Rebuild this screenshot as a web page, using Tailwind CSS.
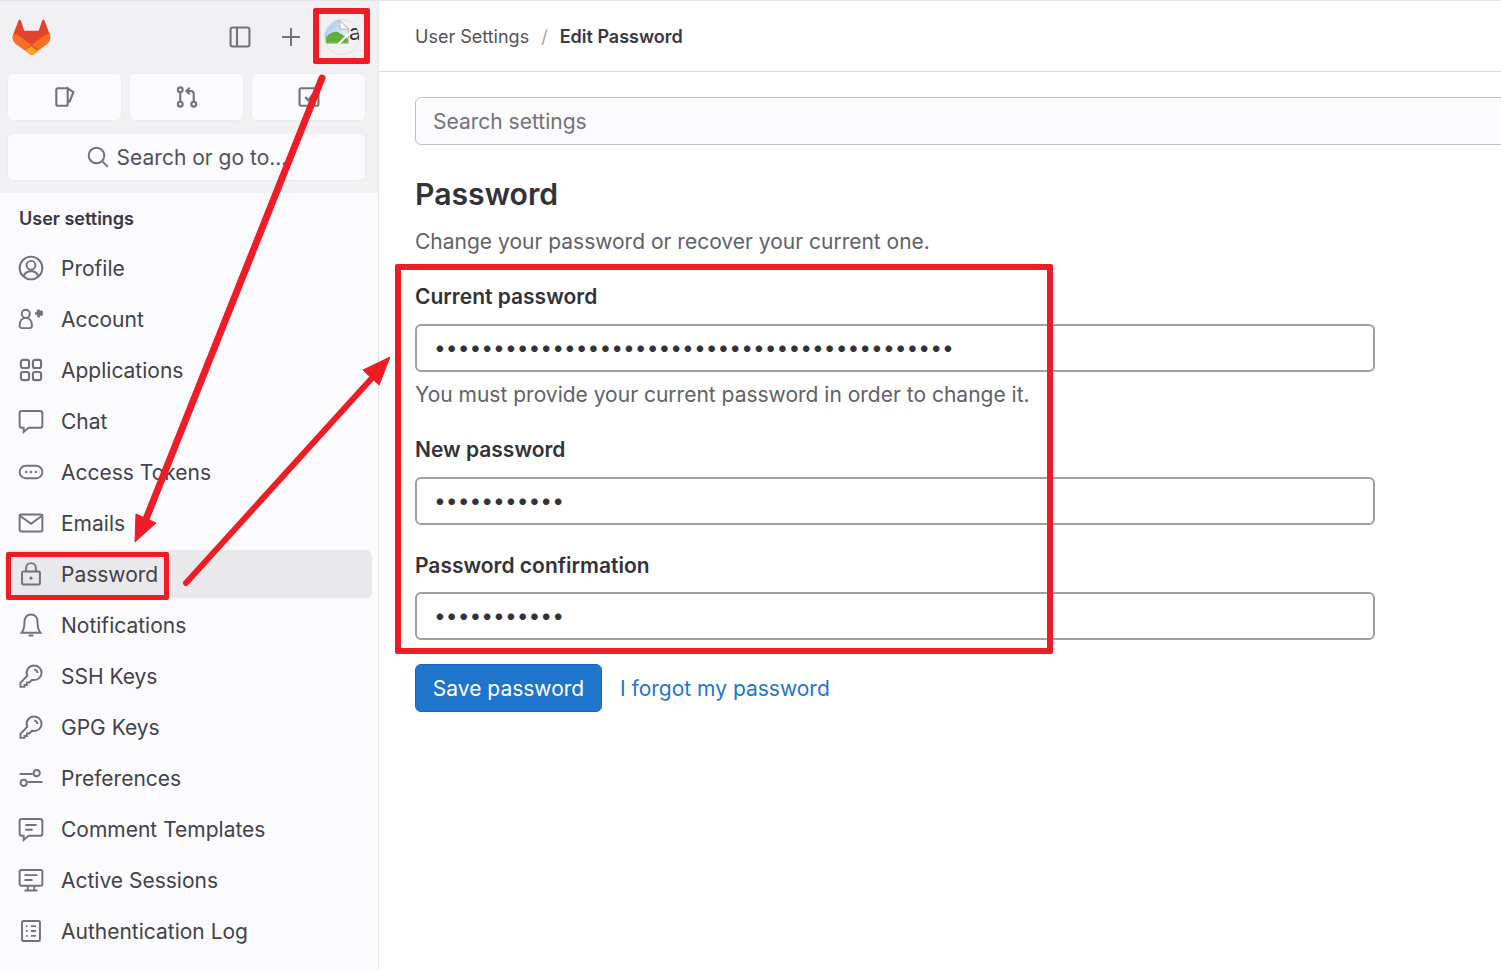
<!DOCTYPE html>
<html lang="en">
<head>
  <meta charset="UTF-8" />
  <title>Edit Password - User Settings</title>
  <script src="https://cdn.jsdelivr.net/npm/@tailwindcss/browser@4"></script>
</head>
<body class="bg-white text-[#333238] font-['Inter',sans-serif] overflow-hidden">
  <div class="relative flex w-[1501px] h-[970px] overflow-hidden border-t border-[#e4e4e6]">

    <!-- sidebar -->
    <aside class="w-[379px] shrink-0 bg-[#fbfafd] border-r border-[#e6e6e8] flex flex-col">
      <div class="bg-[#f1f1f3] h-[192px] pl-[7px] pr-[12px]">
        <div class="flex items-center h-[72px]">
          <svg class="w-[39px] h-[36px] ml-[5px]" viewBox="0 0 25 24">
            <path fill="#e24329" d="m24.5 9.7-.03-.09-3.3-8.6a.86.86 0 0 0-1.63.08l-2.23 6.82H7.7L5.47 1.09a.86.86 0 0 0-1.63-.08L.53 9.6l-.03.09a6.13 6.13 0 0 0 2.03 7.08l5.5 4.12 4.47 3.38 4.47-3.38 5.5-4.12a6.13 6.13 0 0 0 2.03-7.08Z"/>
            <path fill="#fc6d26" d="m24.5 9.7-.03-.09a11.4 11.4 0 0 0-4.5 2.02l-7.47 5.65 4.76 3.6 5.5-4.11a6.13 6.13 0 0 0 1.74-7.07Z"/>
            <path fill="#fca326" d="m8.03 20.88 2.94 2.22 1.53 1.16 1.03-.01.5-.37 2.97-2.23-4.5-3.42-4.47 2.65Z"/>
            <path fill="#fc6d26" d="M5.03 11.63A11.4 11.4 0 0 0 .53 9.6l-.03.09a6.13 6.13 0 0 0 1.74 7.07l5.79 4.12 4.47-3.6-7.47-5.65Z"/>
          </svg>
          <svg class="w-[24px] h-[24px] ml-[177px] text-[#737278]" viewBox="0 0 16 16" fill="none" stroke="currentColor" stroke-width="1.4">
            <rect x="1.700" y="1.700" width="12.600" height="12.600" rx="1.500"/><path d="M6 1.700v12.600"/>
          </svg>
          <svg class="w-[24px] h-[24px] ml-[27px] text-[#737278]" viewBox="0 0 16 16" fill="none" stroke="currentColor" stroke-width="1.3">
            <path d="M8 2v12M2 8h12"/>
          </svg>
          <div class="ml-[21px] w-[36px] h-[36px] rounded-full border border-[#e0e0e2] overflow-hidden relative">
            <svg class="absolute left-0 top-0 w-[24px] h-[24px]" viewBox="0 0 16 16">
              <defs><linearGradient id="sky" x1="0" y1="0" x2="1" y2="1"><stop offset="0" stop-color="#a3c5ef"/><stop offset="1" stop-color="#f4f8fd"/></linearGradient></defs>
              <path fill="url(#sky)" stroke="#a8a8ab" stroke-width=".6" d="M.5.500h9.500l5.500 5.500v9.500H.500z"/>
              <path fill="#5fae35" d="M.800 15.200v-3.500c2-3 5.500-4.500 8-3.500 2 .8 4 2.500 6.400 4.500v2.500z"/>
              <path fill="#fff" stroke="#a8a8ab" stroke-width=".5" d="M10 .500l5.500 5.500H10z"/>
              <path fill="#fbfafd" d="M8 16l7.800-7.800v2L10 16z"/>
            </svg>
            <span class="absolute left-[24px] top-0 text-[22px] leading-[24px] text-[#333238]">a</span>
          </div>
        </div>
        <div class="grid grid-cols-3 gap-[7px]">
          <div class="h-[48px] rounded-[6px] bg-[#fbfafd] border border-[#ececef] flex items-center justify-center">
            <svg class="w-[24px] h-[24px] text-[#737278]" viewBox="0 0 16 16" fill="none" stroke="currentColor" stroke-width="1.4">
              <path d="M10 2.200H3.200a1 1 0 0 0-1 1v9.600a1 1 0 0 0 1 1h5.600a1 1 0 0 0 1-1V2.200l3.800 2.600-2.800 7"/>
            </svg>
          </div>
          <div class="h-[48px] rounded-[6px] bg-[#fbfafd] border border-[#ececef] flex items-center justify-center">
            <svg class="w-[24px] h-[24px] text-[#737278]" viewBox="0 0 16 16" fill="none" stroke="currentColor" stroke-width="1.4">
              <circle cx="3.500" cy="3.200" r="1.600"/><circle cx="3.500" cy="12.800" r="1.600"/><circle cx="12.500" cy="12.800" r="1.600"/>
              <path d="M3.500 4.800v6.400M12.500 11.200V6a2 2 0 0 0-2-2H8M9.800 1.800 7.600 4l2.200 2.200"/>
            </svg>
          </div>
          <div class="h-[48px] rounded-[6px] bg-[#fbfafd] border border-[#ececef] flex items-center justify-center">
            <svg class="w-[24px] h-[24px] text-[#737278]" viewBox="0 0 16 16" fill="none" stroke="currentColor" stroke-width="1.4">
              <rect x="1.700" y="2.200" width="12.600" height="11.600" rx="1"/><path d="m5.500 8 2 2.200 3-4"/>
            </svg>
          </div>
        </div>
        <div class="mt-[12px] h-[48px] rounded-[6px] bg-[#fbfafd] border border-[#ececef] flex items-center justify-center text-[21px] text-[#535158]">
          <svg class="w-[24px] h-[24px] mr-[7px] text-[#737278]" viewBox="0 0 16 16" fill="none" stroke="currentColor" stroke-width="1.300">
            <circle cx="7" cy="7" r="5.200"/><path d="m11 11 3.600 3.600"/>
          </svg>
          <span class="pt-[2px]">Search or go to...</span>
        </div>
      </div>

      <nav class="px-[5px] pt-[12px]">
        <div class="pl-[14px] h-[27px] flex items-center text-[18px] font-semibold text-[#3a383f]">User settings</div>
        <ul class="mt-[10px] text-[21px] text-[#434248]">
          <li class="h-[51px] pt-[2px] flex items-center">
            <svg class="w-[26px] h-[26px] -mt-[2px] ml-[13px] mr-[17px] text-[#737278]" viewBox="0 0 16 16" fill="none" stroke="currentColor" stroke-width="1.200">
              <circle cx="8" cy="8" r="7"/><circle cx="8" cy="6.300" r="2.700"/><path d="M3.500 13c.8-2 2.500-3 4.500-3s3.700 1 4.500 3"/>
            </svg>Profile</li>
          <li class="h-[51px] pt-[2px] flex items-center">
            <svg class="w-[26px] h-[26px] -mt-[2px] ml-[13px] mr-[17px] text-[#737278]" viewBox="0 0 16 16" fill="none" stroke="currentColor" stroke-width="1.200">
              <circle cx="4.800" cy="4.800" r="2.500"/><path d="M1 12c0-3 1.600-4.700 3.800-4.700s3.800 1.700 3.800 4.700c0 1-.6 1.600-1.500 1.600H2.500C1.600 13.600 1 13 1 12Z"/>
              <circle cx="13" cy="4.500" r="1.700" fill="currentColor" stroke-width="1.600" stroke-dasharray="1.400 .8"/>
            </svg>Account</li>
          <li class="h-[51px] pt-[2px] flex items-center">
            <svg class="w-[26px] h-[26px] -mt-[2px] ml-[13px] mr-[17px] text-[#737278]" viewBox="0 0 16 16" fill="none" stroke="currentColor" stroke-width="1.300">
              <rect x="1.800" y="1.800" width="5" height="5" rx="1.300"/><rect x="9.200" y="1.800" width="5" height="5" rx="1.300"/>
              <rect x="1.800" y="9.200" width="5" height="5" rx="1.300"/><rect x="9.200" y="9.200" width="5" height="5" rx="1.300"/>
            </svg>Applications</li>
          <li class="h-[51px] pt-[2px] flex items-center">
            <svg class="w-[26px] h-[26px] -mt-[2px] ml-[13px] mr-[17px] text-[#737278]" viewBox="0 0 16 16" fill="none" stroke="currentColor" stroke-width="1.200">
              <path d="M2.500 1.800h11A1.500 1.500 0 0 1 15 3.300v7.400a1.500 1.500 0 0 1-1.500 1.500H6.500l-3 2.500v-2.500h-1A1.500 1.500 0 0 1 1 10.700V3.300a1.500 1.500 0 0 1 1.500-1.500Z"/>
            </svg>Chat</li>
          <li class="h-[51px] pt-[2px] flex items-center">
            <svg class="w-[26px] h-[26px] -mt-[2px] ml-[13px] mr-[17px] text-[#737278]" viewBox="0 0 16 16" fill="none" stroke="currentColor" stroke-width="1.200">
              <rect x="1" y="4.200" width="14" height="7.600" rx="3.800"/><path d="M5 8h.01M8 8h.01M11 8h.01" stroke-width="1.500" stroke-linecap="round"/>
            </svg>Access Tokens</li>
          <li class="h-[51px] pt-[2px] flex items-center">
            <svg class="w-[26px] h-[26px] -mt-[2px] ml-[13px] mr-[17px] text-[#737278]" viewBox="0 0 16 16" fill="none" stroke="currentColor" stroke-width="1.200">
              <rect x="1" y="2.800" width="14" height="10.400" rx="1"/><path d="m1.200 3.500 6.800 5 6.800-5"/>
            </svg>Emails</li>
          <li class="h-[48px] my-[1.500px] pt-[2px] flex items-center bg-[#e9e8eb] rounded-[6px] mr-[1px]">
            <svg class="w-[26px] h-[26px] -mt-[2px] ml-[13px] mr-[17px] text-[#737278]" viewBox="0 0 16 16" fill="none" stroke="currentColor" stroke-width="1.200">
              <rect x="2.500" y="6.500" width="11" height="8" rx=".8"/><path d="M5 6.500V4.300a3 3 0 0 1 6 0v2.200"/><circle cx="8" cy="10.500" r="1" fill="currentColor" stroke="none"/>
            </svg>Password</li>
          <li class="h-[51px] pt-[2px] flex items-center">
            <svg class="w-[26px] h-[26px] -mt-[2px] ml-[13px] mr-[17px] text-[#737278]" viewBox="0 0 16 16" fill="none" stroke="currentColor" stroke-width="1.200">
              <path d="M8 1.500c-2.700 0-4 2-4 4.500 0 3-.6 5.300-1.800 6.800h11.600C12.600 11.300 12 9 12 6c0-2.500-1.300-4.500-4-4.500ZM6.500 14.500h3"/>
            </svg>Notifications</li>
          <li class="h-[51px] pt-[2px] flex items-center">
            <svg class="w-[26px] h-[26px] -mt-[2px] ml-[13px] mr-[17px] text-[#737278]" viewBox="0 0 16 16" fill="none" stroke="currentColor" stroke-width="1.200">
              <path d="M10 1.500a4.500 4.500 0 0 1 0 9c-.5 0-1-.1-1.400-.2L7 12H5.500v1.500H4v1.200H1.500v-2.500l4.200-4.400A4.500 4.500 0 0 1 10 1.500Z"/><path d="M10 4.200a2 2 0 0 1 2 2"/>
            </svg>SSH Keys</li>
          <li class="h-[51px] pt-[2px] flex items-center">
            <svg class="w-[26px] h-[26px] -mt-[2px] ml-[13px] mr-[17px] text-[#737278]" viewBox="0 0 16 16" fill="none" stroke="currentColor" stroke-width="1.200">
              <path d="M10 1.500a4.500 4.500 0 0 1 0 9c-.5 0-1-.1-1.400-.2L7 12H5.500v1.500H4v1.200H1.500v-2.500l4.200-4.400A4.500 4.500 0 0 1 10 1.500Z"/><path d="M10 4.200a2 2 0 0 1 2 2"/>
            </svg>GPG Keys</li>
          <li class="h-[51px] pt-[2px] flex items-center">
            <svg class="w-[26px] h-[26px] -mt-[2px] ml-[13px] mr-[17px] text-[#737278]" viewBox="0 0 16 16" fill="none" stroke="currentColor" stroke-width="1.200">
              <circle cx="11.500" cy="5" r="1.900"/><circle cx="3.500" cy="11" r="1.900"/><path d="M1 5.500h8M6 10.500h9"/>
            </svg>Preferences</li>
          <li class="h-[51px] pt-[2px] flex items-center">
            <svg class="w-[26px] h-[26px] -mt-[2px] ml-[13px] mr-[17px] text-[#737278]" viewBox="0 0 16 16" fill="none" stroke="currentColor" stroke-width="1.200">
              <path d="M2.500 1.800h11A1.500 1.500 0 0 1 15 3.300v7.400a1.500 1.500 0 0 1-1.500 1.500H6.500l-3 2.500v-2.500h-1A1.500 1.500 0 0 1 1 10.700V3.300a1.500 1.500 0 0 1 1.500-1.500Z"/><path d="M4.500 5.500h7M4.500 8.500h4.500"/>
            </svg>Comment Templates</li>
          <li class="h-[51px] pt-[2px] flex items-center">
            <svg class="w-[26px] h-[26px] -mt-[2px] ml-[13px] mr-[17px] text-[#737278]" viewBox="0 0 16 16" fill="none" stroke="currentColor" stroke-width="1.200">
              <rect x="1" y="1.800" width="14" height="9.700" rx="1"/><path d="M4 5h8M4 8h5M6 11.500v3M10 11.500v3M4 14.500h8"/>
            </svg>Active Sessions</li>
          <li class="h-[51px] pt-[2px] flex items-center">
            <svg class="w-[26px] h-[26px] -mt-[2px] ml-[13px] mr-[17px] text-[#737278]" viewBox="0 0 16 16" fill="none" stroke="currentColor" stroke-width="1.200">
              <rect x="2.500" y="1.800" width="11" height="12.400" rx=".8"/><path d="M5 5h1M8 5h3M5 8h1M8 8h3M5 11h1M8 11h3"/>
            </svg>Authentication Log</li>
        </ul>
      </nav>
    </aside>

    <!-- main -->
    <main class="flex-1 min-w-0">
      <div class="h-[71px] border-b border-[#dcdcde] flex items-center pl-[36px] text-[18px]">
        <span class="text-[#535158]">User Settings</span>
        <span class="mx-[12px] text-[#a4a3a8]">/</span>
        <span class="font-semibold text-[#3a383f]">Edit Password</span>
      </div>
      <div class="pl-[36px]">
        <div class="mt-[25px] h-[48px] w-[1200px] rounded-[6px] bg-[#fbfafd] border border-[#bfbfc3] flex items-center pl-[17px] pt-[1px] text-[21px] text-[#737278]">Search settings</div>
        <h1 class="mt-[27px] text-[30.200px] leading-[44px] font-semibold text-[#333238]">Password</h1>
        <p class="mt-[11px] text-[21px] leading-[30px] text-[#626168]">Change your password or recover your current one.</p>

        <form class="w-[960px]">
          <label class="block mt-[24px] text-[21px] leading-[32px] font-semibold text-[#333238]">Current password</label>
          <input type="password" value="12345678901234567890123456789012345678901234" class="block mt-[11px] w-[960px] h-[48px] rounded-[6px] border-2 border-[#a0a0a3] pl-[17px] pb-[2px] text-[21px] text-[#333238]" />
          <p class="mt-[8px] text-[21px] leading-[30px] text-[#626168]">You must provide your current password in order to change it.</p>
          <label class="block mt-[24px] text-[21px] leading-[32px] font-semibold text-[#333238]">New password</label>
          <input type="password" value="12345678901" class="block mt-[11px] w-[960px] h-[48px] rounded-[6px] border-2 border-[#a0a0a3] pl-[17px] pb-[2px] text-[21px] text-[#333238]" />
          <label class="block mt-[25px] text-[21px] leading-[32px] font-semibold text-[#333238]">Password confirmation</label>
          <input type="password" value="12345678901" class="block mt-[10px] w-[960px] h-[48px] rounded-[6px] border-2 border-[#a0a0a3] pl-[17px] pb-[2px] text-[21px] text-[#333238]" />
          <div class="mt-[24px] flex items-center">
            <button type="button" class="h-[48px] w-[187px] rounded-[6px] bg-[#1f75cb] border border-[#1068bf] text-white text-[21px] pt-[1px]">Save password</button>
            <a class="ml-[18px] text-[21px] pt-[1px] text-[#1f75cb]">I forgot my password</a>
          </div>
        </form>
      </div>
    </main>

    <!-- red annotations drawn over the screenshot -->
    <div class="absolute left-[313px] top-[7px] w-[57px] h-[56px] border-[6px] border-[#ee1c25] rounded-[2px]"></div>
    <div class="absolute left-[6px] top-[551px] w-[163px] h-[48px] border-[5px] border-[#ee1c25] rounded-[2px]"></div>
    <div class="absolute left-[395px] top-[263px] w-[658px] h-[390px] border-[6px] border-[#ee1c25] rounded-[2px]"></div>
    <svg class="absolute left-0 top-0 w-[1501px] h-[970px] pointer-events-none" viewBox="0 0 1501 970" fill="none">
      <path d="M322 77 146 518" stroke="#ee1c25" stroke-width="7" stroke-linecap="round"/>
      <path d="M135 541 136 513 156 522Z" fill="#ee1c25" stroke="#ee1c25" stroke-width="1"/>
      <path d="M186 582 372 377" stroke="#ee1c25" stroke-width="6" stroke-linecap="round"/>
      <path d="M390 356 363 369 379 384Z" fill="#ee1c25" stroke="#ee1c25" stroke-width="1"/>
    </svg>
  </div>
</body>
</html>
